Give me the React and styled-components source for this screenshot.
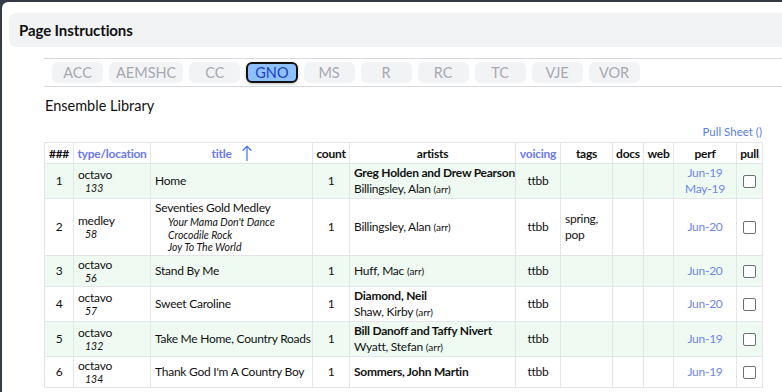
import React from "react";
import styled, { createGlobalStyle } from "styled-components";

const Global = createGlobalStyle`
  html, body { margin: 0; padding: 0; background: #343a46; }
  body { font-family: "Lato", "Liberation Sans", sans-serif; color: #111; }
  * { box-sizing: border-box; }
`;

const Panel = styled.div`
  margin: 2px 0 0 2px;
  background: #fff;
  border-top-left-radius: 6px;
  min-height: 390px;
  padding: 11px 0 0 7px;
  overflow: hidden;
`;

const InstrBar = styled.div`
  background: #f2f3f5;
  border-radius: 7px 0 0 7px;
  height: 34px;
  display: flex;
  align-items: center;
  padding-left: 10px;
  font-weight: 700;
  font-size: 15px;
  letter-spacing: -0.1px;
  width: 900px;
`;

const Content = styled.div`
  padding: 11px 20px 0 35px;
`;

const TabStrip = styled.div`
  border-top: 1px solid #d6d8de;
  border-bottom: 1px solid #d6d8de;
  display: flex;
  gap: 6px;
  padding: 3px 8px 3px 8px;
  width: 900px;
`;

const Tab = styled.div`
  min-width: 51px;
  height: 21px;
  padding: 0 7px;
  border-radius: 6px;
  display: flex;
  align-items: center;
  justify-content: center;
  font-size: 14.5px;
  color: ${(p) => (p.$active ? "#1f3fbf" : "#a8a9b0")};
  background: ${(p) => (p.$active ? "#8ec0fb" : "#f2f3f5")};
  border: ${(p) => (p.$active ? "2px solid #111" : "none")};
  box-shadow: ${(p) => (p.$active ? "0 1px 3px rgba(0,0,0,0.25)" : "none")};
`;

const SectionTitle = styled.div`
  font-size: 14.5px;
  margin: 10px 0 0 1px;
  height: 20px;
`;

const PullLink = styled.div`
  text-align: right;
  color: #5b7ee6;
  font-size: 11.5px;
  margin-top: 8px;
  height: 17px;
`;

const Table = styled.table`
  border-collapse: collapse;
  width: 718px;
  table-layout: fixed;
  font-size: 12px;
  letter-spacing: -0.25px;
`;

const Th = styled.th`
  border: 1px solid #e3e5e8;
  height: 21px;
  padding: 0 2px;
  font-weight: 700;
  font-size: 12px;
  color: ${(p) => (p.$link ? "#6b7ae8" : "#111")};
  text-align: center;
  white-space: nowrap;
`;

const HeadInner = styled.span`
  display: inline-flex;
  align-items: center;
  gap: 10px;
`;

const Row = styled.tr`
  background: ${(p) => (p.$alt ? "#effbf2" : "#fff")};
  height: ${(p) => p.$h}px;
`;

const Td = styled.td`
  border: 1px solid #e3e5e8;
  padding: 1px 4px;
  vertical-align: middle;
  text-align: ${(p) => p.$align || "left"};
  line-height: 16px;
  white-space: nowrap;
  color: ${(p) => (p.$blue ? "#6f86ea" : "#111")};
`;

const Type = styled.div`
  line-height: 13px;
`;

const Loc = styled.div`
  font-style: italic;
  font-size: 10.5px;
  letter-spacing: 0;
  line-height: 14px;
  padding-left: 7px;
`;

const SubTitle = styled.div`
  font-style: italic;
  font-size: 10.5px;
  letter-spacing: 0;
  line-height: 12.5px;
  padding-left: 13px;
`;

const Bold = styled.div`
  font-weight: 700;
`;

const Arr = styled.span`
  font-size: 10px;
  letter-spacing: 0;
`;

const Box = styled.span`
  display: inline-block;
  width: 13px;
  height: 13px;
  border: 1px solid #6b6f78;
  border-radius: 2px;
  vertical-align: middle;
  background: #fff;
`;

const UpArrow = () => (
  <svg width="10" height="16" viewBox="0 0 10 16" aria-hidden="true">
    <path d="M5 15.5V1.2M1 5.2L5 1.2L9 5.2" fill="none" stroke="#4f7be8" strokeWidth="1.3" strokeLinecap="round" strokeLinejoin="round" />
  </svg>
);

const rows = [
  {
    n: 1, type: "octavo", loc: "133", title: "Home", h: 35,
    artists: [{ b: "Greg Holden and Drew Pearson" }, { t: "Billingsley, Alan", arr: true }],
    perf: ["Jun-19", "May-19"],
  },
  {
    n: 2, type: "medley", loc: "58", title: "Seventies Gold Medley", h: 57,
    subs: ["Your Mama Don't Dance", "Crocodile Rock", "Joy To The World"],
    artists: [{ t: "Billingsley, Alan", arr: true }],
    tags: ["spring,", "pop"],
    perf: ["Jun-20"],
  },
  {
    n: 3, type: "octavo", loc: "56", title: "Stand By Me", h: 31,
    artists: [{ t: "Huff, Mac", arr: true }],
    perf: ["Jun-20"],
  },
  {
    n: 4, type: "octavo", loc: "57", title: "Sweet Caroline", h: 35,
    artists: [{ b: "Diamond, Neil" }, { t: "Shaw, Kirby", arr: true }],
    perf: ["Jun-20"],
  },
  {
    n: 5, type: "octavo", loc: "132", title: "Take Me Home, Country Roads", h: 35,
    artists: [{ b: "Bill Danoff and Taffy Nivert" }, { t: "Wyatt, Stefan", arr: true }],
    perf: ["Jun-19"],
  },
  {
    n: 6, type: "octavo", loc: "134", title: "Thank God I'm A Country Boy", h: 31,
    artists: [{ b: "Sommers, John Martin" }],
    perf: ["Jun-19"],
  },
];

const tabs = ["ACC", "AEMSHC", "CC", "GNO", "MS", "R", "RC", "TC", "VJE", "VOR"];
const widths = [29, 77, 162, 37, 166, 45, 52, 31, 30, 63, 26];

export default function App() {
  return (
    <>
      <Global />
      <Panel>
        <InstrBar>Page Instructions</InstrBar>
        <Content>
          <TabStrip>
            {tabs.map((t) => (
              <Tab key={t} $active={t === "GNO"}>{t}</Tab>
            ))}
          </TabStrip>
          <SectionTitle>Ensemble Library</SectionTitle>
          <PullLink>Pull Sheet ()</PullLink>
          <Table>
            <colgroup>
              {widths.map((w, i) => (
                <col key={i} style={{ width: w }} />
              ))}
            </colgroup>
            <thead>
              <tr>
                <Th>###</Th>
                <Th $link>type/location</Th>
                <Th $link>
                  <HeadInner>title<UpArrow /></HeadInner>
                </Th>
                <Th>count</Th>
                <Th>artists</Th>
                <Th $link>voicing</Th>
                <Th>tags</Th>
                <Th>docs</Th>
                <Th>web</Th>
                <Th>perf</Th>
                <Th>pull</Th>
              </tr>
            </thead>
            <tbody>
              {rows.map((r) => (
                <Row key={r.n} $alt={r.n % 2 === 1} $h={r.h}>
                  <Td $align="center">{r.n}</Td>
                  <Td>
                    <Type>{r.type}</Type>
                    <Loc>{r.loc}</Loc>
                  </Td>
                  <Td>
                    <div>{r.title}</div>
                    {r.subs && r.subs.map((s) => <SubTitle key={s}>{s}</SubTitle>)}
                  </Td>
                  <Td $align="center">1</Td>
                  <Td>
                    {r.artists.map((a, i) =>
                      a.b ? (
                        <Bold key={i}>{a.b}</Bold>
                      ) : (
                        <div key={i}>
                          {a.t} <Arr>(arr)</Arr>
                        </div>
                      )
                    )}
                  </Td>
                  <Td $align="center">ttbb</Td>
                  <Td>{r.tags && r.tags.map((t) => <div key={t}>{t}</div>)}</Td>
                  <Td />
                  <Td />
                  <Td $align="center" $blue>
                    {r.perf.map((p) => <div key={p}>{p}</div>)}
                  </Td>
                  <Td $align="center"><Box /></Td>
                </Row>
              ))}
            </tbody>
          </Table>
        </Content>
      </Panel>
    </>
  );
}
